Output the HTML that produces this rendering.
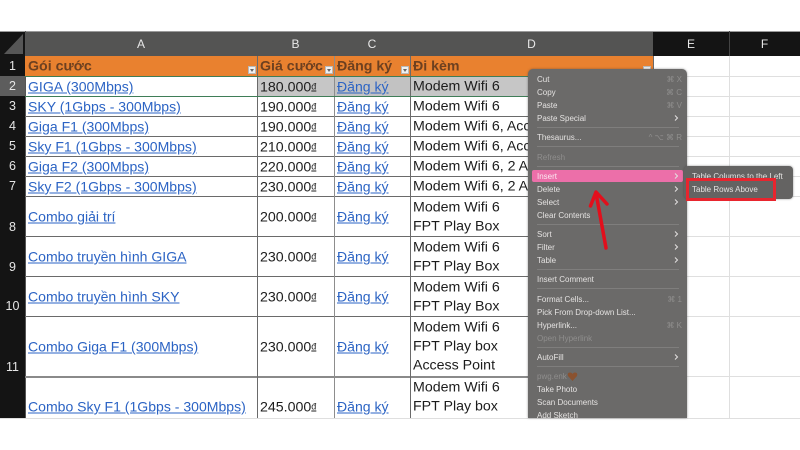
<!DOCTYPE html>
<html><head><meta charset="utf-8"><style>
html,body{margin:0;padding:0;background:#fff;width:800px;height:450px;overflow:hidden}
#p{position:relative;width:800px;height:450px;overflow:hidden;font-family:"Liberation Sans",sans-serif;filter:blur(.35px)}
#p div{position:absolute;white-space:nowrap}
.h{height:1px;background:#6a6a6a;left:25px;width:628px}
.v{width:1px;background:#6a6a6a;top:56px;height:362px}
.g{background:#dfdfdf}
.t{font-size:14.2px;line-height:20px;transform:translateY(.5px);color:#1c1c1c}
.l{font-size:14.05px;line-height:20px;transform:translateY(.5px);color:#2b63c4;text-decoration:underline;left:28px}
.p{left:260px}.c{left:337px}.d{left:413px}
.k{font-size:14.2px;line-height:20px;transform:translateY(.5px);font-weight:bold;color:#6d4020}
.r{left:0;width:25px;text-align:center;color:#e6e6e6;font-size:12.5px;line-height:16px}
.ch{top:36px;color:#e8e8e8;font-size:12px;line-height:16px;text-align:center}
.f{width:8px;height:8px;background:#f0f0f0;top:66px;border:1px solid #b9b9b9;box-sizing:border-box}
.f:after{content:"";position:absolute;left:1px;top:2px;border:2px solid transparent;border-top:3px solid #666}
.m{left:537px;font-size:8px;line-height:14px;color:#e4e2e1}
.x{color:#8f8e8d}
.s{right:118px;font-size:8px;line-height:14px;color:#8f8e8d;text-align:right}
.sp{left:537px;width:142px;height:1px;background:#7f7e7d}
</style></head><body><div id="p">

<!-- header bars -->
<div style="left:0;top:31px;width:800px;height:25px;background:#141414"></div>
<div style="left:25px;top:31px;width:628px;height:25px;background:#545453"></div>
<div style="left:0;top:56px;width:25px;height:362px;background:#141414"></div>
<div style="left:0;top:76px;width:25px;height:20px;background:#5d5d5d"></div>
<div style="left:0;top:31px;width:800px;height:1px;background:#9a9a9a"></div>
<svg style="position:absolute;left:0;top:31px" width="26" height="26"><polygon points="4,23 23,3 23,23" fill="#565656"/></svg>
<div style="left:25px;top:31px;width:1px;height:387px;background:#555"></div>
<div style="left:729px;top:31px;width:1px;height:25px;background:#444"></div>
<div class="ch" style="left:25px;width:232px">A</div>
<div class="ch" style="left:257px;width:77px">B</div>
<div class="ch" style="left:334px;width:76px">C</div>
<div class="ch" style="left:410px;width:243px">D</div>
<div class="ch" style="left:653px;width:76px">E</div>
<div class="ch" style="left:729px;width:71px">F</div>

<!-- empty grid E/F -->
<div class="g" style="left:729px;top:56px;width:1px;height:362px"></div>
<div class="g" style="left:653px;top:76px;width:147px;height:1px"></div>
<div class="g" style="left:653px;top:96px;width:147px;height:1px"></div>
<div class="g" style="left:653px;top:116px;width:147px;height:1px"></div>
<div class="g" style="left:653px;top:136px;width:147px;height:1px"></div>
<div class="g" style="left:653px;top:156px;width:147px;height:1px"></div>
<div class="g" style="left:653px;top:176px;width:147px;height:1px"></div>
<div class="g" style="left:653px;top:196px;width:147px;height:1px"></div>
<div class="g" style="left:653px;top:236px;width:147px;height:1px"></div>
<div class="g" style="left:653px;top:276px;width:147px;height:1px"></div>
<div class="g" style="left:653px;top:316px;width:147px;height:1px"></div>
<div class="g" style="left:653px;top:376px;width:147px;height:1px"></div>
<div class="g" style="left:0;top:418px;width:800px;height:1px"></div>

<!-- header row + selection -->
<div style="left:25px;top:56px;width:628px;height:20px;background:#e9812f"></div>
<div style="left:257px;top:77px;width:396px;height:19px;background:#c6c6c6"></div>
<div style="left:334px;top:77px;width:76px;height:19px;background:#c2c2c2"></div>

<!-- table lines -->
<div class="h" style="top:116px"></div><div class="h" style="top:136px"></div><div class="h" style="top:156px"></div><div class="h" style="top:176px"></div><div class="h" style="top:196px"></div><div class="h" style="top:236px"></div><div class="h" style="top:276px"></div><div class="h" style="top:316px"></div><div class="h" style="top:376px;height:2px;background:#8a8a8a"></div>
<div class="v" style="left:257px"></div><div class="v" style="left:334px;background:#8d8d8d"></div><div class="v" style="left:410px"></div><div class="v" style="left:653px;height:20px"></div>
<div style="left:25px;top:76px;width:628px;height:1px;background:#3f7d57"></div>
<div style="left:25px;top:96px;width:628px;height:1px;background:#3f7d57"></div>

<!-- row numbers -->
<div class="r" style="top:58px">1</div><div class="r" style="top:78px">2</div><div class="r" style="top:98px">3</div><div class="r" style="top:118px">4</div><div class="r" style="top:138px">5</div><div class="r" style="top:158px">6</div><div class="r" style="top:178px">7</div><div class="r" style="top:219px">8</div><div class="r" style="top:259px">9</div><div class="r" style="top:298px">10</div><div class="r" style="top:359px">11</div>

<!-- header labels -->
<div class="k" style="left:28px;top:56px">Gói cước</div>
<div class="k" style="left:260px;top:56px">Giá cước</div>
<div class="k" style="left:337px;top:56px">Đăng ký</div>
<div class="k" style="left:413px;top:56px">Đi kèm</div>
<div class="f" style="left:248px"></div><div class="f" style="left:325px"></div><div class="f" style="left:401px"></div><div class="f" style="left:643px"></div>

<!-- col A -->
<div class="l" style="top:76px">GIGA (300Mbps)</div>
<div class="l" style="top:96px">SKY (1Gbps - 300Mbps)</div>
<div class="l" style="top:116px">Giga F1 (300Mbps)</div>
<div class="l" style="top:136px">Sky F1 (1Gbps - 300Mbps)</div>
<div class="l" style="top:156px">Giga F2 (300Mbps)</div>
<div class="l" style="top:176px">Sky F2 (1Gbps - 300Mbps)</div>
<div class="l" style="top:206px">Combo giải trí</div>
<div class="l" style="top:246px">Combo truyền hình GIGA</div>
<div class="l" style="top:286px">Combo truyền hình SKY</div>
<div class="l" style="top:336px">Combo Giga F1 (300Mbps)</div>
<div class="l" style="top:396px">Combo Sky F1 (1Gbps - 300Mbps)</div>

<!-- col B -->
<div class="t p" style="top:76px">180.000<u style="font-size:9px;vertical-align:2px">đ</u></div>
<div class="t p" style="top:96px">190.000<u style="font-size:9px;vertical-align:2px">đ</u></div>
<div class="t p" style="top:116px">190.000<u style="font-size:9px;vertical-align:2px">đ</u></div>
<div class="t p" style="top:136px">210.000<u style="font-size:9px;vertical-align:2px">đ</u></div>
<div class="t p" style="top:156px">220.000<u style="font-size:9px;vertical-align:2px">đ</u></div>
<div class="t p" style="top:176px">230.000<u style="font-size:9px;vertical-align:2px">đ</u></div>
<div class="t p" style="top:206px">200.000<u style="font-size:9px;vertical-align:2px">đ</u></div>
<div class="t p" style="top:246px">230.000<u style="font-size:9px;vertical-align:2px">đ</u></div>
<div class="t p" style="top:286px">230.000<u style="font-size:9px;vertical-align:2px">đ</u></div>
<div class="t p" style="top:336px">230.000<u style="font-size:9px;vertical-align:2px">đ</u></div>
<div class="t p" style="top:396px">245.000<u style="font-size:9px;vertical-align:2px">đ</u></div>

<!-- col C -->
<div class="l c" style="left:337px;top:76px">Đăng ký</div>
<div class="l c" style="left:337px;top:96px">Đăng ký</div>
<div class="l c" style="left:337px;top:116px">Đăng ký</div>
<div class="l c" style="left:337px;top:136px">Đăng ký</div>
<div class="l c" style="left:337px;top:156px">Đăng ký</div>
<div class="l c" style="left:337px;top:176px">Đăng ký</div>
<div class="l c" style="left:337px;top:206px">Đăng ký</div>
<div class="l c" style="left:337px;top:246px">Đăng ký</div>
<div class="l c" style="left:337px;top:286px">Đăng ký</div>
<div class="l c" style="left:337px;top:336px">Đăng ký</div>
<div class="l c" style="left:337px;top:396px">Đăng ký</div>

<!-- col D -->
<div class="t d" style="top:76px">Modem Wifi 6</div>
<div class="t d" style="top:96px">Modem Wifi 6</div>
<div class="t d" style="top:116px">Modem Wifi 6, Access Point</div>
<div class="t d" style="top:136px">Modem Wifi 6, Access Point</div>
<div class="t d" style="top:156px">Modem Wifi 6, 2 Access Point</div>
<div class="t d" style="top:176px">Modem Wifi 6, 2 Access Point</div>
<div class="t d" style="top:197px">Modem Wifi 6</div><div class="t d" style="top:216px">FPT Play Box</div>
<div class="t d" style="top:237px">Modem Wifi 6</div><div class="t d" style="top:256px">FPT Play Box</div>
<div class="t d" style="top:277px">Modem Wifi 6</div><div class="t d" style="top:296px">FPT Play Box</div>
<div class="t d" style="top:317px">Modem Wifi 6</div><div class="t d" style="top:336px">FPT Play box</div><div class="t d" style="top:355px">Access Point</div>
<div class="t d" style="top:377px">Modem Wifi 6</div><div class="t d" style="top:396px">FPT Play box</div>

<!-- white below image -->
<div style="left:0;top:419px;width:800px;height:31px;background:#fff"></div>

<!-- context menu -->
<div style="left:528px;top:69px;width:159px;height:349px;background:#6b6a69;border-radius:5px 5px 0 0;box-shadow:0 0 2px rgba(60,60,60,.55)"></div>
<div style="left:532px;top:170px;width:151px;height:12px;background:#ec6fa9;border-radius:2px"></div>

<div class="m" style="top:73px">Cut</div><div class="s" style="top:73px">⌘ X</div>
<div class="m" style="top:86px">Copy</div><div class="s" style="top:86px">⌘ C</div>
<div class="m" style="top:99px">Paste</div><div class="s" style="top:99px">⌘ V</div>
<div class="m" style="top:112px">Paste Special</div>
<div class="sp" style="top:127px"></div>
<div class="m" style="top:131px">Thesaurus...</div><div class="s" style="top:131px">^ ⌥ ⌘ R</div>
<div class="sp" style="top:146px"></div>
<div class="m x" style="top:151px">Refresh</div>
<div class="sp" style="top:166px"></div>
<div class="m" style="top:170px;color:#fbe9f2">Insert</div>
<div class="m" style="top:183px">Delete</div>
<div class="m" style="top:196px">Select</div>
<div class="m" style="top:209px">Clear Contents</div>
<div class="sp" style="top:224px"></div>
<div class="m" style="top:228px">Sort</div>
<div class="m" style="top:241px">Filter</div>
<div class="m" style="top:254px">Table</div>
<div class="sp" style="top:269px"></div>
<div class="m" style="top:273px">Insert Comment</div>
<div class="sp" style="top:288px"></div>
<div class="m" style="top:293px">Format Cells...</div><div class="s" style="top:293px">⌘ 1</div>
<div class="m" style="top:306px">Pick From Drop-down List...</div>
<div class="m" style="top:319px">Hyperlink...</div><div class="s" style="top:319px">⌘ K</div>
<div class="m x" style="top:332px">Open Hyperlink</div>
<div class="sp" style="top:347px"></div>
<div class="m" style="top:351px">AutoFill</div>
<div class="sp" style="top:366px"></div>
<div class="m x" style="top:370px">pwg.enk</div>
<svg style="position:absolute;left:567px;top:371px" width="11" height="11"><path d="M5.500 10 L1 5 Q0 1.500 3 1.500 Q4.800 1.500 5.500 3 Q6.200 1.500 8 1.500 Q11 1.500 10 5 Z" fill="#8a5230"/></svg>
<div class="m" style="top:383px">Take Photo</div>
<div class="m" style="top:396px">Scan Documents</div>
<div class="m" style="top:409px">Add Sketch</div>

<!-- chevrons -->
<svg style="position:absolute;left:0;top:0" width="800" height="450" fill="none" stroke="#e4e2e1" stroke-width="1">
<path d="M675 115.500l2.500 2.500-2.500 2.500M675 173.500l2.500 2.500-2.500 2.500M675 186.500l2.500 2.500-2.500 2.500M675 199.500l2.500 2.500-2.500 2.500M675 231.500l2.500 2.500-2.500 2.500M675 244.500l2.500 2.500-2.500 2.500M675 257.500l2.500 2.500-2.500 2.500M675 354.500l2.500 2.500-2.500 2.500"/>
</svg>

<!-- submenu -->
<div style="left:684px;top:166px;width:109px;height:33px;background:#646362;border-radius:4px;box-shadow:0 0 2px rgba(50,50,50,.5)"></div>
<div class="m" style="left:692px;top:170px">Table Columns to the Left</div>
<div class="m" style="left:692px;top:183px">Table Rows Above</div>
<div style="left:686px;top:178px;width:90px;height:23px;border:3px solid #e8252e;box-sizing:border-box"></div>

<!-- arrow -->
<svg style="position:absolute;left:0;top:0" width="800" height="450" fill="none" stroke="#e20f1c" stroke-width="3.5" stroke-linecap="round" stroke-linejoin="round">
<path d="M606 248L596 193M590.500 206L596 192L607 204"/>
</svg>
</div></body></html>
